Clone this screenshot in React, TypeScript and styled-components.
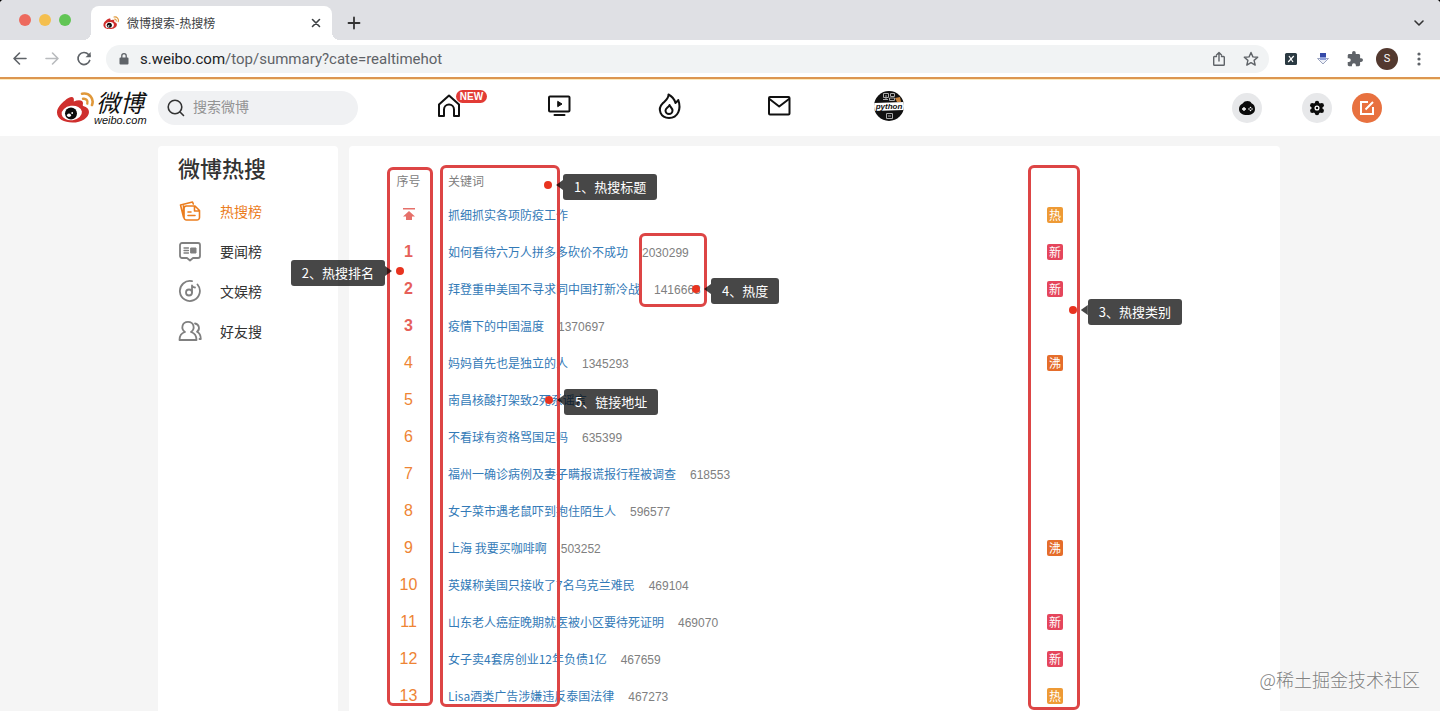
import React from 'react';
import styled, { createGlobalStyle } from 'styled-components';

const cjk = '"Noto Sans CJK SC", sans-serif';
const latin = '"Liberation Sans", "Noto Sans CJK SC", sans-serif';

const Global = createGlobalStyle`
  *, *::before, *::after { box-sizing: border-box; }
  body { margin: 0; background: #000; font-family: ${cjk}; color: #333; }
  button { border: 0; padding: 0; background: none; color: inherit; font: inherit; cursor: pointer; }
  a { text-decoration: none; color: inherit; }
  svg { display: block; flex: none; }
`;

const Shell = styled.div`
  position: relative;
  display: flex;
  flex-direction: column;
  height: 100vh;
  overflow: hidden;
  border-radius: 4px 4px 0 0;
  background: #f5f5f5;
`;

/* Browser window */
const TabStrip = styled.div`
  display: flex;
  flex: none;
  align-items: flex-end;
  height: 40px;
  padding: 0 14px 0 19px;
  background: #dfe0e4;
`;
const Lights = styled.div`
  display: flex;
  gap: 8px;
  align-self: center;
  width: 72px;
`;
const Light = styled.button<{ $color: string }>`
  width: 12px;
  height: 12px;
  border-radius: 50%;
  background: ${(p) => p.$color};
`;
const Tab = styled.div`
  position: relative;
  display: flex;
  align-items: center;
  gap: 8px;
  width: 241px;
  height: 34px;
  padding: 0 10px 0 12px;
  border-radius: 8px 8px 0 0;
  background: #fff;
  font-size: 12px;
  line-height: 18px;
  color: #3c4043;
  &::before, &::after {
    content: '';
    position: absolute;
    bottom: 0;
    width: 8px;
    height: 8px;
  }
  &::before { right: 100%; background: radial-gradient(circle at 0 0, transparent 8px, #fff 8px); }
  &::after { left: 100%; background: radial-gradient(circle at 100% 0, transparent 8px, #fff 8px); }
`;
const TabTitle = styled.span`
  flex: 1;
`;
const StripButton = styled.button<{ $end?: boolean }>`
  display: grid;
  place-items: center;
  width: 14px;
  height: 34px;
  margin-left: ${(p) => (p.$end ? 'auto' : '15px')};
`;
const Toolbar = styled.div`
  display: flex;
  flex: none;
  align-items: center;
  gap: 16px;
  height: 37px;
  padding: 0 13px 0 12px;
  background: #fff;
  color: #5f6368;
`;
const Address = styled.div`
  display: flex;
  flex: 1;
  align-items: center;
  gap: 16px;
  height: 28px;
  margin: 0 -2px;
  padding: 0 10px 0 12px;
  border-radius: 14px;
  background: #f1f3f4;
`;
const Url = styled.div`
  flex: 1;
  margin-left: -6px;
  font: 15px/20px Roboto, sans-serif;
  b { font-weight: 400; color: #202124; }
`;
const Profile = styled.button`
  width: 22px;
  height: 22px;
  margin: 0 -3px;
  border-radius: 50%;
  background: #53392f;
  color: #fff;
  font: 11px/22px Roboto, sans-serif;
`;

/* Site header */
const Header = styled.header`
  display: flex;
  flex: none;
  align-items: center;
  height: 59px;
  padding: 0 58px 0 56px;
  border-top: 2px solid #dc9650;
  background: #fff;
  box-shadow: inset 0 1px 0 #fde9bd;
`;
const Logo = styled.a`
  display: flex;
  align-items: center;
  width: 102px;
  height: 38px;
`;
const LogoWords = styled.span`
  display: flex;
  flex-direction: column;
  color: #111;
  white-space: nowrap;
`;
const LogoName = styled.span`
  padding-left: 2px;
  font: italic 24px/24px ${cjk};
`;
const LogoHost = styled.span`
  font: italic 11px/12px ${latin};
`;
const Search = styled.label`
  display: flex;
  align-items: center;
  gap: 8px;
  width: 200px;
  height: 34px;
  padding: 0 9px;
  border-radius: 17px;
  background: #f0f1f3;
`;
const SearchInput = styled.input`
  flex: 1;
  min-width: 0;
  border: 0;
  outline: 0;
  padding: 0 0 3px;
  background: none;
  font: 14px/20px ${cjk};
  &::placeholder { color: #939393; opacity: 1; }
`;
const Nav = styled.nav`
  display: flex;
  align-items: center;
  gap: 80px;
  margin-left: 76px;
  padding-bottom: 4px;
`;
const NavLink = styled.a`
  position: relative;
  display: grid;
  place-items: center;
  width: 30px;
  height: 30px;
  color: #111;
`;
const NewBadge = styled.span`
  position: absolute;
  left: 22px;
  top: -1px;
  width: 31px;
  height: 13px;
  border-radius: 7px;
  background: #e23b35;
  color: #fff;
  font: bold 10px/13px ${latin};
  text-align: center;
`;
const Actions = styled.div`
  display: flex;
  gap: 20px;
  margin-left: auto;
`;
const RoundButton = styled.button<{ $accent?: boolean; $spaced?: boolean }>`
  display: grid;
  place-items: center;
  width: 30px;
  height: 30px;
  margin-right: ${(p) => (p.$spaced ? '20px' : '0')};
  border-radius: 50%;
  background: ${(p) => (p.$accent ? '#e8713f' : '#e7e8ea')};
  color: ${(p) => (p.$accent ? '#fff' : '#0b0b0b')};
`;

/* Page body */
const Page = styled.main`
  display: flex;
  flex: 1;
  gap: 11px;
  width: 100%;
  max-width: 1124px;
  margin: 0 auto;
  padding: 10px 2px 0 0;
`;
const Side = styled.aside`
  width: 180px;
  padding: 6px 20px;
  border-radius: 4px 4px 0 0;
  background: #fff;
`;
const SideTitle = styled.h1`
  margin: 0 0 9px;
  font-size: 22px;
  line-height: 30px;
  font-weight: 500;
`;
const SideLink = styled.a<{ $active?: boolean }>`
  display: flex;
  align-items: center;
  gap: 18px;
  height: 40px;
  font-size: 14px;
  color: ${(p) => (p.$active ? '#eb7d1e' : '#333')};
  svg { color: ${(p) => (p.$active ? '#eb7d1e' : '#808080')}; }
`;
const Main = styled.section`
  position: relative;
  flex: 1;
  padding: 18px 20px;
  border-radius: 4px 4px 0 0;
  background: #fff;
`;
const Table = styled.table`
  width: 100%;
  border-collapse: collapse;
  table-layout: fixed;
  font-size: 12px;
  line-height: 18px;
`;
const HeadCell = styled.th<{ $width?: number; $center?: boolean }>`
  width: ${(p) => (p.$width ? `${p.$width}px` : 'auto')};
  height: 33px;
  padding: 0;
  text-align: ${(p) => (p.$center ? 'center' : 'left')};
  font-weight: 400;
  color: #808080;
`;
const Cell = styled.td`
  height: 37px;
  padding: 0 0 1px;
  white-space: nowrap;
`;
const RankCell = styled(Cell)<{ $top: boolean }>`
  text-align: center;
  font: ${(p) => (p.$top ? 'bold' : 'normal')} 16px/20px ${latin};
  color: ${(p) => (p.$top ? '#e6605a' : '#ee8434')};
  svg { margin: 0 auto; }
`;
const Topic = styled.a`
  color: #337ab7;
`;
const Heat = styled.span`
  margin-left: 14px;
  font-family: ${latin};
  color: #808080;
`;
const tagColors: Record<string, string> = { 热: '#ee9a35', 新: '#e5465c', 沸: '#e56d2b' };
const Tag = styled.span<{ $kind: string }>`
  display: block;
  width: 16px;
  height: 16px;
  border-radius: 2px;
  background: ${(p) => tagColors[p.$kind]};
  color: #fff;
  line-height: 16px;
  text-align: center;
`;

/* Callouts drawn over the page */
const Frame = styled.div<{ $x?: number; $right?: number; $y: number; $w: number; $h: number }>`
  position: absolute;
  ${(p) => (p.$right !== undefined ? `right: ${p.$right}px;` : `left: ${p.$x}px;`)}
  top: ${(p) => p.$y}px;
  width: ${(p) => p.$w}px;
  height: ${(p) => p.$h}px;
  border: 3px solid #dd4545;
  border-radius: 6px;
  pointer-events: none;
`;
const Note = styled.div<{ $x?: number; $right?: number; $y: number; $flip?: boolean }>`
  position: absolute;
  ${(p) => (p.$right !== undefined ? `right: ${p.$right}px;` : `left: ${p.$x}px;`)}
  top: ${(p) => p.$y}px;
  display: flex;
  flex-direction: ${(p) => (p.$flip ? 'row-reverse' : 'row')};
  align-items: flex-start;
`;
const Dot = styled.i`
  width: 8px;
  height: 8px;
  margin-top: 7px;
  border-radius: 50%;
  background: #e8331f;
`;
const Pointer = styled.i<{ $flip?: boolean }>`
  width: 7px;
  height: 10px;
  margin-top: 6px;
  margin-left: ${(p) => (p.$flip ? '0' : '4px')};
  margin-right: ${(p) => (p.$flip ? '4px' : '0')};
  background: rgba(0, 0, 0, 0.72);
  clip-path: ${(p) => (p.$flip ? 'polygon(0 0, 100% 50%, 0 100%)' : 'polygon(100% 0, 0 50%, 100% 100%)')};
`;
const NoteText = styled.span`
  padding: 0 11px;
  border-radius: 3px;
  background: rgba(0, 0, 0, 0.72);
  color: #fff;
  font-size: 13px;
  line-height: 26px;
  white-space: nowrap;
`;
const Watermark = styled.div`
  position: absolute;
  right: 20px;
  bottom: 19px;
  font-size: 18px;
  line-height: 26px;
  font-weight: 300;
  color: #808080;
  text-shadow: 0 0 2px #fff;
`;

const stroke = { fill: 'none', stroke: 'currentColor', strokeLinecap: 'round', strokeLinejoin: 'round' } as const;

const WeiboMark = ({ width, height }: { width: number; height: number }) => (
  <svg width={width} height={height} viewBox="0 0 38 32" aria-hidden="true">
    <path d="M9 8.500C12 5.500 16.500 4 17.500 6c.7 1.200.3 2.500.3 3.500 4-1.800 9.500-2 9.200 2-.1 1-.6 2 .2 2.400 3.800 1.100 5.800 3 5.800 6C33 25.500 25.500 30.500 16.500 30.500 8 30.500 1 27 1 20.500 1 16 4.500 12 9 8.500z" fill="#cf2f2d" />
    <ellipse cx="15.800" cy="21" rx="10.200" ry="7.200" fill="#fff" transform="rotate(-8 15.800 21)" />
    <circle cx="15" cy="21.500" r="6" fill="#0c0c0c" />
    <ellipse cx="13" cy="23.300" rx="2" ry="1.700" fill="#fff" />
    <circle cx="16.200" cy="21" r=".9" fill="#fff" />
    <path d="M26 1.800c7-1.500 12.500 4.500 10 11.200" fill="none" stroke="#e0983a" strokeWidth="2.600" strokeLinecap="round" />
    <path d="M27 6.800c3-.6 5.300 1.800 4.300 4.700" fill="none" stroke="#e0983a" strokeWidth="2.400" strokeLinecap="round" />
  </svg>
);

const rows: { rank: number; topic: string; heat?: string; tag?: string }[] = [
  { rank: 0, topic: '抓细抓实各项防疫工作', tag: '热' },
  { rank: 1, topic: '如何看待六万人拼多多砍价不成功', heat: '2030299', tag: '新' },
  { rank: 2, topic: '拜登重申美国不寻求同中国打新冷战', heat: '1416668', tag: '新' },
  { rank: 3, topic: '疫情下的中国温度', heat: '1370697' },
  { rank: 4, topic: '妈妈首先也是独立的人', heat: '1345293', tag: '沸' },
  { rank: 5, topic: '南昌核酸打架致2死系谣言' },
  { rank: 6, topic: '不看球有资格骂国足吗', heat: '635399' },
  { rank: 7, topic: '福州一确诊病例及妻子瞒报谎报行程被调查', heat: '618553' },
  { rank: 8, topic: '女子菜市遇老鼠吓到抱住陌生人', heat: '596577' },
  { rank: 9, topic: '上海 我要买咖啡啊', heat: '503252', tag: '沸' },
  { rank: 10, topic: '英媒称美国只接收了7名乌克兰难民', heat: '469104' },
  { rank: 11, topic: '山东老人癌症晚期就医被小区要待死证明', heat: '469070', tag: '新' },
  { rank: 12, topic: '女子卖4套房创业12年负债1亿', heat: '467659', tag: '新' },
  { rank: 13, topic: 'Lisa酒类广告涉嫌违反泰国法律', heat: '467273', tag: '热' },
];

const sideIcons = [
  <svg key="hot" width="24" height="24" viewBox="0 0 24 24" {...stroke} strokeWidth="1.600">
    <path d="M5.500 18 2.500 6 14.500 3l.8 2M5.500 6.800 5.500 18" />
    <path d="M8.500 7h8.500l4.500 4.500V18.500a2.500 2.500 0 0 1-2.500 2.500H8.500A2.500 2.500 0 0 1 6 18.500v-9A2.500 2.500 0 0 1 8.500 7zM16.500 7.500V12H21M10 13h3M10 16.500h7" />
  </svg>,
  <svg key="news" width="24" height="24" viewBox="0 0 24 24" {...stroke} strokeWidth="1.800">
    <path d="M4 4h16a2 2 0 0 1 2 2v11a2 2 0 0 1-2 2h-5l-3 2.500L9 19H4a2 2 0 0 1-2-2V6a2 2 0 0 1 2-2z" />
    <path d="M6 9h4.500M6 11.500h4.500M6 14h4.500" strokeWidth="1.300" />
    <rect x="13" y="9" width="5" height="5" fill="currentColor" strokeWidth="1" />
  </svg>,
  <svg key="fun" width="24" height="24" viewBox="0 0 24 24" {...stroke} strokeWidth="1.800">
    <path d="M14 2.200A10 10 0 1 0 19.500 5.500" />
    <circle cx="11" cy="13.500" r="3" />
    <path d="M14 13.500V6.500c.5 1.500 1.600 2 3 2" />
  </svg>,
  <svg key="friends" width="24" height="24" viewBox="0 0 24 24" {...stroke} strokeWidth="1.800">
    <path d="M7 13C2.500 10 4 2.800 10 2.800S17.500 10 13 13c3.500 1 5.500 4 5.500 8H1.500c0-4 2-7 5.500-8z" />
    <path d="M17 4.500c4.500.8 5.200 6 2 8.300 2.500 1.200 3.800 4 3.800 7.200H21.500" />
  </svg>,
];
const sideNames = ['热搜榜', '要闻榜', '文娱榜', '好友搜'];

export default function App() {
  return (
    <Shell>
      <Global />
      <TabStrip>
        <Lights>
          <Light $color="#ed6a5e" aria-label="关闭窗口" />
          <Light $color="#f4bf4f" aria-label="最小化" />
          <Light $color="#61c554" aria-label="最大化" />
        </Lights>
        <Tab>
          <WeiboMark width={16} height={14} />
          <TabTitle>微博搜索-热搜榜</TabTitle>
          <button aria-label="关闭标签页">
            <svg width="12" height="12" viewBox="0 0 12 12" {...stroke} strokeWidth="1.600"><path d="m2.500 2.500 7 7m0-7-7 7" /></svg>
          </button>
        </Tab>
        <StripButton aria-label="新标签页">
          <svg width="14" height="14" viewBox="0 0 14 14" {...stroke} strokeWidth="1.800"><path d="M7 1.500v11M1.500 7h11" /></svg>
        </StripButton>
        <StripButton $end aria-label="搜索标签页">
          <svg width="12" height="12" viewBox="0 0 12 12" {...stroke} strokeWidth="1.600"><path d="m2 4 4 4 4-4" /></svg>
        </StripButton>
      </TabStrip>

      <Toolbar>
        <button aria-label="后退">
          <svg width="16" height="16" viewBox="0 0 16 16" {...stroke} strokeWidth="1.600"><path d="M14 7.500H2m5.500-5.500L2 7.500 7.500 13" /></svg>
        </button>
        <button aria-label="前进">
          <svg width="16" height="16" viewBox="0 0 16 16" {...stroke} stroke="#b9bbbe" strokeWidth="1.600"><path d="M2 7.500h12M8.500 2 14 7.500 8.500 13" /></svg>
        </button>
        <button aria-label="刷新">
          <svg width="16" height="16" viewBox="0 0 16 16" {...stroke} strokeWidth="1.700"><path d="M13.700 9.500a6 6 0 1 1-1.200-6L14 5" /><path d="M14.700 1v5.200H9.500z" fill="currentColor" stroke="none" /></svg>
        </button>
        <Address>
          <svg width="12" height="14" viewBox="0 0 12 14" fill="currentColor"><path d="M2.500 5.500h7a1 1 0 0 1 1 1v5a1 1 0 0 1-1 1h-7a1 1 0 0 1-1-1v-5a1 1 0 0 1 1-1z" /><path d="M3.800 6V3.800a2.200 2.200 0 0 1 4.400 0V6" fill="none" stroke="currentColor" strokeWidth="1.300" /></svg>
          <Url><b>s.weibo.com</b>/top/summary?cate=realtimehot</Url>
          <button aria-label="分享">
            <svg width="16" height="16" viewBox="0 0 16 16" {...stroke} strokeWidth="1.400"><path d="M5.500 5.500h-2a.8.800 0 0 0-.8.800v7.200c0 .5.400.8.800.8h9c.5 0 .8-.4.800-.8V6.300a.8.800 0 0 0-.8-.8h-2M8 10V1.500M5.500 4 8 1.500 10.500 4" /></svg>
          </button>
          <button aria-label="收藏">
            <svg width="16" height="16" viewBox="0 0 16 16" {...stroke} strokeWidth="1.400"><path d="m8 1.500 1.900 4.400 4.800.4-3.600 3.100 1.100 4.700L8 11.600l-4.200 2.500 1.100-4.700-3.600-3.100 4.800-.4z" /></svg>
          </button>
        </Address>
        <button aria-label="扩展 X">
          <svg width="16" height="16" viewBox="0 0 16 16"><rect x="2" y="2" width="12" height="12" rx="1.500" fill="#2b3a42" /><path d="m6 5 4 6M10.800 5l-5.600 6" stroke="#fff" strokeWidth="1.200" fill="none" /></svg>
        </button>
        <button aria-label="下载扩展">
          <svg width="16" height="16" viewBox="0 0 16 16"><path d="M2.500 7.500h11L8 13z" fill="#eef1f8" stroke="#9aa3bf" /><path d="M5 2h6v5.500H5z" fill="#3549a8" /><path d="M5 6h6v3H5z" fill="#8fa0da" /></svg>
        </button>
        <button aria-label="扩展程序">
          <svg width="16" height="16" viewBox="1 1 22 22" fill="currentColor"><path d="M20.500 11H19V7c0-1.100-.9-2-2-2h-4V3.500a2.500 2.500 0 0 0-5 0V5H4c-1.100 0-2 .9-2 2v3.800h1.500a2.700 2.700 0 0 1 0 5.400H2V20c0 1.100.9 2 2 2h3.800v-1.500a2.700 2.700 0 0 1 5.400 0V22H17c1.100 0 2-.9 2-2v-4h1.500a2.500 2.500 0 0 0 0-5z" /></svg>
        </button>
        <Profile aria-label="用户">S</Profile>
        <button aria-label="菜单">
          <svg width="16" height="16" viewBox="0 0 16 16" fill="currentColor"><circle cx="8" cy="3" r="1.600" /><circle cx="8" cy="8" r="1.600" /><circle cx="8" cy="13" r="1.600" /></svg>
        </button>
      </Toolbar>

      <Header>
        <Logo href="#" aria-label="微博">
          <WeiboMark width={38} height={32} />
          <LogoWords>
            <LogoName>微博</LogoName>
            <LogoHost>weibo.com</LogoHost>
          </LogoWords>
        </Logo>
        <Search>
          <svg width="18" height="18" viewBox="0 0 18 18" {...stroke} stroke="#333" strokeWidth="1.600"><circle cx="8" cy="8" r="6.800" /><path d="m13 13 3.500 3.500" /></svg>
          <SearchInput placeholder="搜索微博" aria-label="搜索微博" />
        </Search>
        <Nav>
          <NavLink href="#" aria-label="首页">
            <svg width="26" height="26" viewBox="0 0 26 26" {...stroke} strokeWidth="2"><path d="M3 11.500 13 2.500l10 9V23h-5v-6.500a5 5 0 0 0-10 0V23H3z" /></svg>
            <NewBadge>NEW</NewBadge>
          </NavLink>
          <NavLink href="#" aria-label="视频">
            <svg width="26" height="26" viewBox="0 0 26 26" {...stroke} strokeWidth="2"><rect x="3" y="3.500" width="20.500" height="15" rx="1" /><path d="M8.500 22h10" /><path d="m12 8.500 4 2.500-4 2.500z" fill="currentColor" strokeWidth="1" /></svg>
          </NavLink>
          <NavLink href="#" aria-label="热门">
            <svg width="26" height="26" viewBox="0 0 26 26" {...stroke} strokeWidth="2"><path d="M12.500 1.500c.2 4-2.500 5.500-5.500 8.500-6.500 6.500-2 15 6 15 9 0 12.500-9 9.300-18-.8 1-1.500 2.200-2.800 3C18.500 6.500 15.500 3 12.500 1.500z" /><path d="M13.500 12c.5 2 3 3 3 5.500a3.500 3.500 0 0 1-7 0c0-2.500 3-3 4-5.500z" /></svg>
          </NavLink>
          <NavLink href="#" aria-label="消息">
            <svg width="26" height="26" viewBox="0 0 26 26" {...stroke} strokeWidth="2"><rect x="3" y="4" width="20.500" height="17.500" rx="1" /><path d="m3.500 6 9.700 7.500L23 6" /></svg>
          </NavLink>
          <NavLink href="#" aria-label="个人主页">
            <svg width="30" height="30" viewBox="0 0 30 30">
              <defs><clipPath id="avatar"><circle cx="15" cy="15" r="15" /></clipPath></defs>
              <g clipPath="url(#avatar)">
                <rect width="30" height="30" fill="#111" />
                <path d="M9.500 2.500h5v4h-5zM9 8.500h5M12 4v4M16.500 2.500h4v3h-4zM15.500 7h5v2.500h-5z" stroke="#aaa" fill="none" />
                <path d="m21 7 5-1 1 5h-4z" fill="#c9853f" />
                <path d="M0 12l30-1v8L0 20z" fill="#fff" />
                <path d="M12.500 22.500h6v5h-6zM14 25h3" stroke="#aaa" fill="none" />
                <text x="15" y="18" textAnchor="middle" fontFamily="Liberation Sans" fontSize="8" fontWeight="700" fontStyle="italic" fill="#111">python</text>
              </g>
            </svg>
          </NavLink>
        </Nav>
        <Actions>
          <RoundButton $spaced aria-label="游戏">
            <svg width="18" height="16" viewBox="0 0 18 16"><path d="M9.500 1c2 0 3.300.8 4 2.200C16 4.200 17 6.500 17 9c0 4-3.500 6-8 6s-8-2-8-6c0-2.500 1.200-4.500 3.700-5.500C5.700 1.800 7.500 1 9.500 1z" fill="currentColor" /><path d="M4 9h4M6 7v4" stroke="#fff" strokeWidth="1.300" /><circle cx="11" cy="9" r=".8" fill="#fff" /><circle cx="14" cy="9" r=".8" fill="#fff" /><circle cx="12.500" cy="7.500" r=".8" fill="#fff" /><circle cx="12.500" cy="10.500" r=".8" fill="#fff" /></svg>
          </RoundButton>
          <RoundButton aria-label="设置">
            <svg width="16" height="16" viewBox="0 0 16 16" fill="currentColor"><circle cx="8" cy="8" r="5.500" /><circle cx="8" cy="3" r="2.200" /><circle cx="8" cy="13" r="2.200" /><circle cx="3.300" cy="5.300" r="2.200" /><circle cx="12.700" cy="5.300" r="2.200" /><circle cx="3.300" cy="10.700" r="2.200" /><circle cx="12.700" cy="10.700" r="2.200" /><circle cx="8" cy="8" r="1.900" fill="none" stroke="#fff" strokeWidth="1.300" /></svg>
          </RoundButton>
          <RoundButton $accent aria-label="发微博">
            <svg width="18" height="18" viewBox="0 0 18 18" fill="none" stroke="currentColor" strokeWidth="2"><path d="M10 3H3v12h12V8M7.500 10.500 15 3" /></svg>
          </RoundButton>
        </Actions>
      </Header>

      <Page>
        <Side>
          <SideTitle>微博热搜</SideTitle>
          {sideNames.map((name, i) => (
            <SideLink key={name} href="#" $active={i === 0}>
              {sideIcons[i]}
              {name}
            </SideLink>
          ))}
        </Side>
        <Main>
          <Table>
            <thead>
              <tr>
                <HeadCell $width={79} $center>序号</HeadCell>
                <HeadCell>关键词</HeadCell>
                <HeadCell $width={213} aria-label="类别" />
              </tr>
            </thead>
            <tbody>
              {rows.map((r) => (
                <tr key={r.rank}>
                  <RankCell $top={r.rank < 4}>
                    {r.rank || (
                      <svg width="14" height="16" viewBox="0 0 14 16" fill="#e6706a"><path d="M1 1h12v1.600H1zM7 4l6 5.500H10V13H4V9.500H1z" /></svg>
                    )}
                  </RankCell>
                  <Cell>
                    <Topic href="#">{r.topic}</Topic>
                    {r.heat && <Heat>{r.heat}</Heat>}
                  </Cell>
                  <Cell>{r.tag && <Tag $kind={r.tag}>{r.tag}</Tag>}</Cell>
                </tr>
              ))}
            </tbody>
          </Table>

          <Frame $x={38} $y={21} $w={46} $h={539} />
          <Frame $x={91} $y={19} $w={120} $h={542} />
          <Frame $x={290} $y={87} $w={68} $h={74} />
          <Frame $right={200} $y={19} $w={52} $h={545} />
          <Note $x={195} $y={28}><Dot /><Pointer /><NoteText>1、热搜标题</NoteText></Note>
          <Note $right={876} $y={114} $flip><Dot /><Pointer $flip /><NoteText>2、热搜排名</NoteText></Note>
          <Note $right={98} $y={153}><Dot /><Pointer /><NoteText>3、热搜类别</NoteText></Note>
          <Note $x={343} $y={132}><Dot /><Pointer /><NoteText>4、热度</NoteText></Note>
          <Note $x={196} $y={243}><Dot /><Pointer /><NoteText>5、链接地址</NoteText></Note>
        </Main>
      </Page>
      <Watermark>@稀土掘金技术社区</Watermark>
    </Shell>
  );
}
